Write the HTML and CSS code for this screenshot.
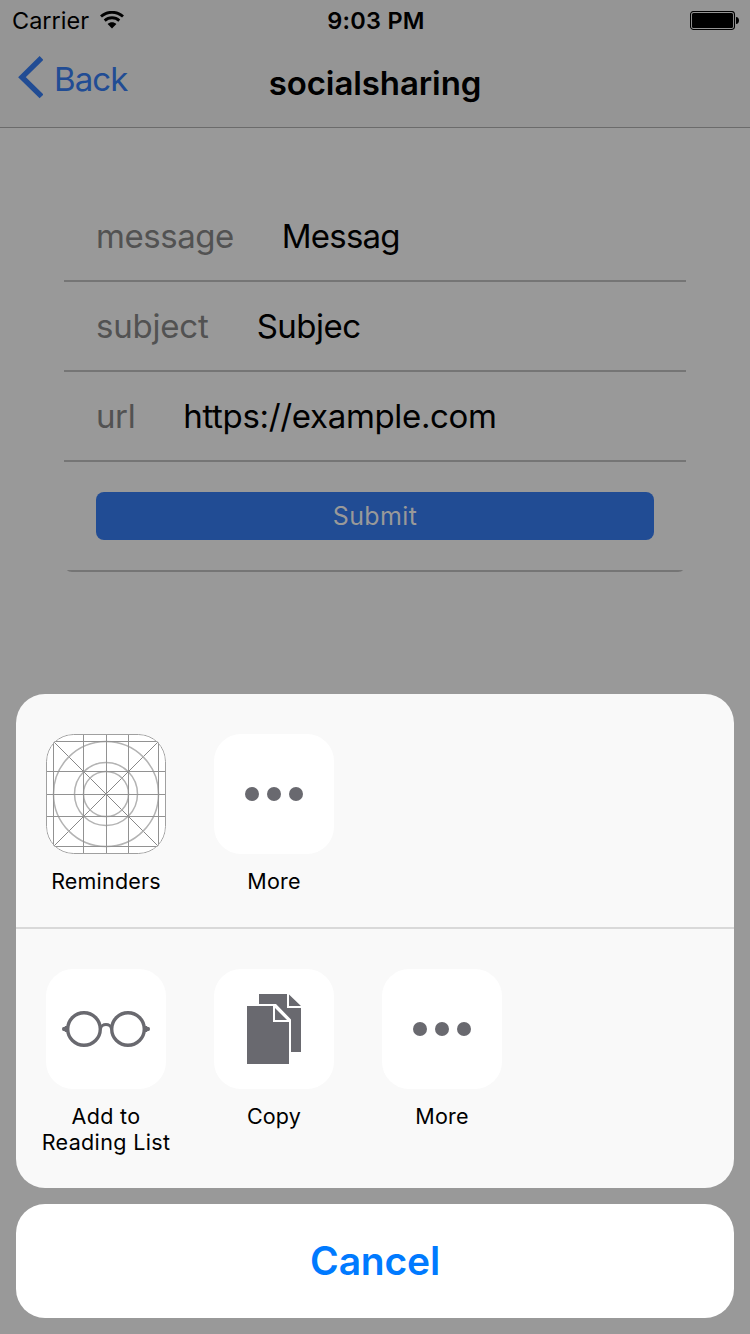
FILE: index.html
```html
<!DOCTYPE html>
<html lang="en">
<head>
<meta charset="utf-8">
<title>socialsharing</title>
<link rel="stylesheet" href="styles.css">
</head>
<body>
<div class="screen">
  <header class="navbar">
    <div class="status">
      <div class="status-left">
        <span class="carrier">Carrier</span>
        <svg class="wifi" width="24" height="18" viewBox="0 0 24 18">
          <g fill="none" stroke="#000" stroke-width="2.8">
            <path d="M1 5.600C7.200-.2 16.800-.2 23 5.600"/>
            <path d="M4.700 9.600C8.900 5.800 15.100 5.800 19.300 9.600"/>
          </g>
          <path d="M7.600 13C10.200 10.800 13.800 10.800 16.400 13L12 17.500z"/>
        </svg>
      </div>
      <span class="time">9:03 PM</span>
      <div class="status-right">
        <svg width="50" height="20" viewBox="0 0 50 20">
          <rect x=".5" y=".5" width="44" height="18" rx="3.200" fill="none" stroke="#000" stroke-width="1.100"/>
          <rect x="2" y="2" width="41" height="15" rx="1.500"/>
          <path d="M46 6c4 0 4 7 0 7z"/>
        </svg>
      </div>
    </div>
    <div class="titlebar">
      <a class="back">
        <svg width="26" height="44" viewBox="0 0 26 44"><path d="M24.500 3L5 22.200L24.500 41.400" fill="none" stroke="#214c94" stroke-width="5.400"/></svg>
        <span class="back-text">Back</span>
      </a>
      <h1 class="title">socialsharing</h1>
      <span></span>
    </div>
  </header>
  <main class="content">
    <div class="list">
      <div class="row"><span class="label l-message">message</span><span class="value v-message">Messag</span></div>
      <div class="row"><span class="label l-subject">subject</span><span class="value v-subject">Subjec</span></div>
      <div class="row"><span class="label l-url">url</span><span class="value v-url">https://example.com</span></div>
      <div class="row row-submit"><button class="submit">Submit</button></div>
    </div>
  </main>
  <div class="sheet">
    <div class="panel">
      <div class="group">
        <div class="item">
          <svg class="tile" width="120" height="120" viewBox="0 0 120 120" fill="none" stroke="#999" stroke-width="1">
            <path d="M7.500 7.500L112.500 112.500M112.500 7.500L7.500 112.500" stroke="#888"/>
            <g stroke="#b3b3b3" stroke-width="1.500"><circle cx="60" cy="60" r="52.500"/><circle cx="60" cy="60" r="31.500"/><circle cx="60" cy="60" r="22.500"/></g>
            <path d="M7.500 6V114M37.500 0V120M60.500 0V120M82.500 0V120M112.500 6V114M6 7.500H114M0 37.500H120M0 60.500H120M0 82.500H120M6 112.500H114" stroke="#929292"/>
            <rect x=".5" y=".5" width="119" height="119" rx="27" stroke="#a0a0a0"/>
          </svg>
          <span class="caption">Reminders</span>
        </div>
        <div class="item">
          <svg class="tile" width="120" height="120" viewBox="0 0 120 120" fill="#69696f"><circle cx="38" cy="60" r="7"/><circle cx="60" cy="60" r="7"/><circle cx="82" cy="60" r="7"/></svg>
          <span class="caption">More</span>
        </div>
      </div>
      <div class="group group-actions">
        <div class="item">
          <svg class="tile" width="120" height="120" viewBox="0 0 120 120" fill="none" stroke="#69696f">
            <circle cx="38" cy="60" r="16.300" stroke-width="3.400"/><circle cx="82" cy="60" r="16.300" stroke-width="3.400"/>
            <path d="M54.500 60C55 54 65 54 65.500 60" stroke-width="3"/>
            <path d="M21 57h-2l-.5 1h-1q-1.500 0-1.500 2t1.500 2h1l.5 1H21zM99 57h2l.5 1h1q1.500 0 1.500 2t-1.500 2h-1l-.5 1H99z" fill="#69696f" stroke="none"/>
          </svg>
          <span class="caption caption-wide">Add to<br>Reading List</span>
        </div>
        <div class="item">
          <svg class="tile" width="120" height="120" viewBox="0 0 120 120" fill="#69696f">
            <path d="M45 25H73V39H87V83H77V50.500L62 35H45zM75 25.500L87 37H75z"/>
            <path d="M33 37H59V53H75V95H33zM61 39L73 51H61z"/>
          </svg>
          <span class="caption">Copy</span>
        </div>
        <div class="item">
          <svg class="tile" width="120" height="120" viewBox="0 0 120 120" fill="#69696f"><circle cx="38" cy="60" r="7"/><circle cx="60" cy="60" r="7"/><circle cx="82" cy="60" r="7"/></svg>
          <span class="caption">More</span>
        </div>
      </div>
    </div>
    <button class="cancel">Cancel</button>
  </div>
</div>
</body>
</html>
```
FILE: styles.css
```css
* { box-sizing: border-box; }
body { margin: 0; font-family: Inter, "Liberation Sans", sans-serif; color: #000; }
button { border: 0; padding: 0; font-family: inherit; }
svg { display: block; flex: none; }
.screen { position: relative; width: 750px; height: 1334px; background: #999; overflow: hidden; }

.navbar { height: 128px; background: #959595; border-bottom: 1px solid #6b6b6b; }
.status { display: grid; grid-template-columns: 1fr auto 1fr; height: 42px; padding: 0 10px 0 12px; align-items: center; font-size: 23.5px; line-height: 42px; }
.status-left { display: flex; align-items: center; gap: 11px; }
.wifi { margin-top: -2px; }
.status-right { display: flex; justify-content: flex-end; }
.time { font-weight: 600; letter-spacing: .25px; }
.titlebar { display: grid; grid-template-columns: 1fr auto 1fr; height: 85px; padding: 0 17px; }
.back { display: flex; gap: 11px; padding-top: 13px; color: #214c94; font-size: 33px; line-height: 48px; }
.back-text { letter-spacing: -.9px; }
.title { margin: 0; padding-top: 16px; font-size: 33px; line-height: 50px; font-weight: 600; letter-spacing: -.1px; }

.content { padding: 64px; }
.list { border-radius: 8px; overflow: hidden; }
.row { display: flex; height: 90px; padding: 0 32px; align-items: center; gap: 48px; border-bottom: 2px solid #757575; font-size: 33px; line-height: 88px; white-space: nowrap; }
.label { color: #525252; }
.l-message { letter-spacing: -.45px; }
.l-subject { letter-spacing: -.2px; }
.l-url { letter-spacing: -.4px; }
.v-message { letter-spacing: -.8px; }
.v-subject { letter-spacing: -.5px; }
.v-url { letter-spacing: -.33px; }
.row-submit { height: 110px; }
.submit { flex: 1; height: 48px; border-radius: 8px; background: #214c94; color: #999; font-size: 25px; line-height: 48px; letter-spacing: .35px; }

.sheet { position: absolute; left: 16px; right: 16px; bottom: 16px; display: flex; flex-direction: column; gap: 16px; }
.panel { height: 494px; border-radius: 29px; background: #f9f9f9; overflow: hidden; }
.group { display: flex; height: 235px; padding: 40px 6px 0; }
.group-actions { height: 259px; }
.group:first-child { border-bottom: 2px solid #d9d9d9; }
.item { flex: none; width: 168px; display: flex; flex-direction: column; align-items: center; }
.tile { width: 120px; height: 120px; border-radius: 27px; background: #fff; }
.caption { margin-top: 14px; font-size: 21.5px; line-height: 26px; text-align: center; white-space: nowrap; letter-spacing: .2px; }
.caption-wide { letter-spacing: .35px; }
.cancel { height: 114px; border-radius: 29px; background: #fff; color: #007aff; font-size: 39px; font-weight: 600; line-height: 114px; letter-spacing: -.2px; }
```
